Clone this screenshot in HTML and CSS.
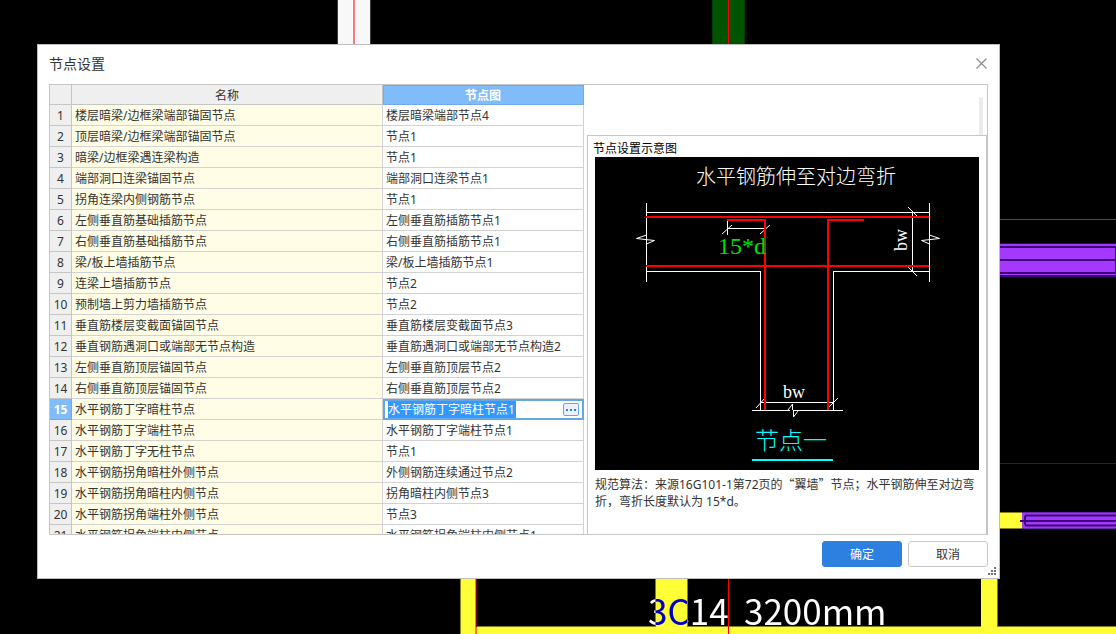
FILE: index.html
```html
<!DOCTYPE html>
<html lang="zh-CN">
<head>
<meta charset="utf-8">
<title>节点设置</title>
<link rel="stylesheet" href="styles.css">
</head>
<body>
<svg class="model" aria-hidden="true">
  <!-- columns above the dialog -->
  <rect x="337" y="0" width="34" height="60" fill="#3c3c3c"/>
  <rect x="338" y="0" width="32" height="60" fill="#f8f8f8"/>
  <rect x="353" y="0" width="2" height="60" fill="#f77c7c"/>
  <rect x="712" y="0" width="33" height="60" fill="#003c00"/>
  <rect x="713" y="0" width="31" height="60" fill="#005400"/>
  <!-- beams on the right -->
  <rect x="990" y="219" width="100%" height="1" fill="#dc1414"/>
  <rect x="990" y="243" width="100%" height="34" fill="#3d0078"/>
  <g fill="#a538ff">
    <rect x="990" y="244" width="100%" height="2"/>
    <rect x="990" y="248" width="125" height="11"/>
    <rect x="990" y="261" width="125" height="11"/>
    <rect x="990" y="274" width="100%" height="1"/>
  </g>
  <rect x="990" y="463" width="100%" height="1" fill="#780000"/>
  <rect x="990" y="512" width="32" height="17" fill="#828219"/>
  <rect x="990" y="513" width="32" height="15" fill="#ffff38"/>
  <rect x="1022" y="512" width="100%" height="17" fill="#6a20b0"/>
  <rect x="1022" y="513" width="100%" height="15" fill="#a538ff"/>
  <path d="M1300 515.5H1026L1025 517V524L1026 525.5H1300" fill="none" stroke="#3d0078" stroke-width="2"/>
  <rect x="1020" y="520" width="100%" height="2" fill="#3d0078"/>
  <!-- walls below the dialog -->
  <g fill="#828219">
    <rect x="460" y="570" width="16" height="100%"/>
    <rect x="655" y="570" width="33" height="60"/>
    <rect x="981" y="570" width="17" height="60"/>
    <rect x="476" y="626" width="100%" height="100%"/>
  </g>
  <g fill="#ffff38">
    <rect x="461" y="570" width="14" height="100%"/>
    <rect x="656" y="570" width="31" height="57"/>
    <rect x="981" y="570" width="16" height="57"/>
    <rect x="477" y="627" width="100%" height="100%"/>
  </g>
  <rect x="475" y="570" width="1" height="100%" fill="#ff7a1c"/>
  <rect x="476" y="570" width="1" height="57" fill="#780000"/>
  <rect x="476" y="627" width="1" height="100%" fill="#ff7a1c"/>
  <text class="model-label" x="648" y="625">3C14</text>
  <text class="model-label" x="744" y="625">3200mm</text>
  <rect x="728" y="0" width="1" height="100%" fill="#ff0000"/>
</svg>

<main class="desktop">
  <section class="dialog" role="dialog" aria-labelledby="dialog-title">
    <header class="titlebar">
      <h1 class="dialog-title" id="dialog-title">节点设置</h1>
      <button class="close" type="button" aria-label="关闭">
        <svg width="11" height="11" viewBox="0 0 11 11"><path d="M.5 .5L10.500 10.500M10.500 .5L.5 10.500" stroke="#8c8c8c" stroke-width="1.200" fill="none"/></svg>
      </button>
    </header>

    <div class="frame">
      <div class="grid-pane">
        <table class="grid">
          <colgroup><col class="col-no"><col class="col-name"><col class="col-node"></colgroup>
          <thead>
            <tr><th></th><th>名称</th><th class="current">节点图</th></tr>
          </thead>
          <tbody>
            <tr><th>1</th><td>楼层暗梁/边框梁端部锚固节点</td><td>楼层暗梁端部节点4</td></tr>
            <tr><th>2</th><td>顶层暗梁/边框梁端部锚固节点</td><td>节点1</td></tr>
            <tr><th>3</th><td>暗梁/边框梁遇连梁构造</td><td>节点1</td></tr>
            <tr><th>4</th><td>端部洞口连梁锚固节点</td><td>端部洞口连梁节点1</td></tr>
            <tr><th>5</th><td>拐角连梁内侧钢筋节点</td><td>节点1</td></tr>
            <tr><th>6</th><td>左侧垂直筋基础插筋节点</td><td>左侧垂直筋插筋节点1</td></tr>
            <tr><th>7</th><td>右侧垂直筋基础插筋节点</td><td>右侧垂直筋插筋节点1</td></tr>
            <tr><th>8</th><td>梁/板上墙插筋节点</td><td>梁/板上墙插筋节点1</td></tr>
            <tr><th>9</th><td>连梁上墙插筋节点</td><td>节点2</td></tr>
            <tr><th>10</th><td>预制墙上剪力墙插筋节点</td><td>节点2</td></tr>
            <tr><th>11</th><td>垂直筋楼层变截面锚固节点</td><td>垂直筋楼层变截面节点3</td></tr>
            <tr><th>12</th><td>垂直钢筋遇洞口或端部无节点构造</td><td>垂直筋遇洞口或端部无节点构造2</td></tr>
            <tr><th>13</th><td>左侧垂直筋顶层锚固节点</td><td>左侧垂直筋顶层节点2</td></tr>
            <tr><th>14</th><td>右侧垂直筋顶层锚固节点</td><td>右侧垂直筋顶层节点2</td></tr>
            <tr><th class="current">15</th><td>水平钢筋丁字暗柱节点</td><td class="editing"><div class="editor"><input class="editor-text" type="text" aria-label="节点图" value="水平钢筋丁字暗柱节点1"><button class="more" type="button" aria-label="选择节点"><svg width="10" height="2" viewBox="0 0 10 2"><path d="M0 0h2v2H0zM4 0h2v2H4zM8 0h2v2H8z" fill="#2d7fe0"/></svg></button></div></td></tr>
            <tr><th>16</th><td>水平钢筋丁字端柱节点</td><td>水平钢筋丁字端柱节点1</td></tr>
            <tr><th>17</th><td>水平钢筋丁字无柱节点</td><td>节点1</td></tr>
            <tr><th>18</th><td>水平钢筋拐角暗柱外侧节点</td><td>外侧钢筋连续通过节点2</td></tr>
            <tr><th>19</th><td>水平钢筋拐角暗柱内侧节点</td><td>拐角暗柱内侧节点3</td></tr>
            <tr><th>20</th><td>水平钢筋拐角端柱外侧节点</td><td>节点3</td></tr>
            <tr><th>21</th><td>水平钢筋拐角端柱内侧节点</td><td>水平钢筋拐角端柱内侧节点1</td></tr>
          </tbody>
        </table>
      </div>

      <div class="side">
        <div class="side-top"><div class="thumb"></div></div>
        <section class="preview">
          <h2 class="preview-title">节点设置示意图</h2>
          <svg class="drawing" viewBox="595 157 384 313" role="img" aria-label="节点设置示意图">
            <rect x="595" y="157" width="384" height="313" fill="#000"/>
            <text class="cad" x="696" y="184" font-size="20" fill="#fff">水平钢筋伸至对边弯折</text>
            <g fill="none" stroke="#fff" shape-rendering="crispEdges">
              <path d="M646.500 203V282M929.500 203V282M646 212.500H930M646 271.500H761M833 271.500H930M760.500 271V410M833.500 271V410M912.500 212V272M727.500 221V235M727 228.500H765M760 402.500H834M752 410.500H790M794 410.500H843"/>
            </g>
            <g fill="none" stroke="#fff">
              <path d="M646.500 235L636.500 238.500L654.500 240.500L646.500 244M929.500 235L939.500 238.500L921.500 240.500L929.500 244M722 234L732 225M760 234L770 225M908 207L917 216M908 267L917 276M756 408L765 398M828 408L838 398M788 410L792.500 404V410M793.500 410V417L798 411"/>
            </g>
            <g fill="none" stroke="#f00" stroke-width="2" shape-rendering="crispEdges">
              <path d="M646 217H929M646 266H929M727 220H765V410M864 220H828V410"/>
            </g>
            <text class="cad" x="718" y="254" font-size="24" fill="#00e000">15*d</text>
            <text class="cad" x="783" y="398" font-size="18" fill="#fff">bw</text>
            <text class="cad" transform="translate(907 251) rotate(-90)" font-size="18" fill="#fff">bw</text>
            <text class="cad" x="755" y="449" font-size="24" fill="#0ff">节点一</text>
            <rect x="752" y="459" width="81" height="2" fill="#0ff"/>
          </svg>
          <p class="note">规范算法：来源16G101-1第72页的<span class="wide">“</span>翼墙<span class="wide">”</span>节点；水平钢筋伸至对边弯折，弯折长度默认为 15*d。</p>
        </section>
      </div>
    </div>

    <footer class="actions">
      <button class="btn primary" type="button">确定</button>
      <button class="btn" type="button">取消</button>
    </footer>
    <svg class="grip" width="8" height="8" viewBox="0 0 8 8" aria-hidden="true"><path d="M6 0h2v2H6zM3 3h2v2H3zM6 3h2v2H6zM0 6h2v2H0zM3 6h2v2H3zM6 6h2v2H6z" fill="#6e7378"/></svg>
  </section>
</main>
</body>
</html>
```

FILE: styles.css
```css
* {
  box-sizing: border-box;
}

body {
  margin: 0;
  background: #000;
  color: #333;
  font-family: "Noto Sans", "Noto Sans CJK SC", sans-serif;
  font-size: 12px;
  overflow: hidden;
}

button,
input {
  font: inherit;
}

.model {
  position: absolute;
  inset: 0;
  width: 100%;
  height: 100%;
  isolation: isolate;
  background: #000;
}

.model-label {
  font-family: "Noto Sans CJK SC", sans-serif;
  font-size: 35px;
  fill: #fff;
  mix-blend-mode: difference;
}

.desktop {
  position: relative;
  display: flex;
  height: 100vh;
  padding: 44px 116px 55px 37px;
}

.dialog {
  position: relative;
  flex: 1;
  display: flex;
  flex-direction: column;
  min-width: 0;
  padding: 0 11px 11px;
  border: 1px solid #bebebe;
  background: #fff;
}

.titlebar {
  display: flex;
  align-items: center;
  justify-content: space-between;
  height: 39px;
  flex: none;
  padding-bottom: 3px;
}

.dialog-title {
  margin: 0;
  font-size: 14px;
  font-weight: 400;
}

.close {
  display: flex;
  padding: 1px;
  border: 0;
  background: none;
}

.frame {
  flex: 1;
  display: flex;
  min-height: 0;
  border: 1px solid #c5c5c5;
}

.grid-pane {
  flex: 534;
  min-width: 0;
  overflow: hidden;
}

.grid {
  width: 100%;
  table-layout: fixed;
  border-collapse: separate;
  border-spacing: 0;
}

.col-no {
  width: 22px;
}

.col-node {
  width: 201px;
}

.grid th,
.grid td {
  height: 21px;
  padding: 2px 3px 0;
  border: solid #d2d2d2;
  border-width: 0 1px 1px 0;
  line-height: 18px;
  white-space: nowrap;
  overflow: hidden;
}

.grid th {
  padding: 2px 0 0;
  border-color: #c5c5c5;
  background: #efefef;
  font-weight: 400;
  text-align: center;
}

.grid thead th {
  height: 20px;
  line-height: 17px;
}

.grid td {
  text-align: left;
}

.grid td:nth-child(2) {
  background: #fffde6;
}

.grid th.current {
  border-color: #6fabe8;
  background: #80bbfa;
  color: #fff;
  font-weight: 700;
}

.grid thead th.current {
  box-shadow: inset 1px 1px #6fabe8;
}

.grid td.editing {
  padding: 0;
  border: 0;
}

.editor {
  display: flex;
  align-items: center;
  justify-content: space-between;
  height: 21px;
  padding: 0 3px;
  border: 2px solid #65a6e6;
  background: #fff;
}

.editor-text {
  width: 128px;
  height: 17px;
  padding: 0;
  border: 0;
  background: #3399ff;
  color: #fff;
}

.more {
  display: flex;
  align-items: center;
  justify-content: center;
  width: 16px;
  height: 13px;
  padding: 0;
  border: 1px solid #65a6e6;
  border-radius: 2px;
  background: #eaf3fd;
}

.side {
  flex: 400;
  display: flex;
  flex-direction: column;
  min-width: 0;
  padding-left: 3px;
}

.side-top {
  display: flex;
  justify-content: flex-end;
  flex: none;
  height: 50px;
  padding: 12px 4px 0 0;
}

.thumb {
  width: 4px;
  border-radius: 2px 2px 0 0;
  background: #ebebeb;
}

.preview {
  flex: 1;
  min-height: 0;
  padding: 4px 7px 0;
  border: solid #c5c5c5;
  border-width: 1px 1px 0;
}

.preview-title {
  margin: 0 -2px;
  color: #000;
  font-size: 12px;
  font-weight: 400;
  line-height: 17px;
}

.drawing {
  display: block;
  width: 100%;
}

.cad {
  font-family: "Liberation Serif", "Noto Sans CJK SC", serif;
  font-weight: 300;
}

.note {
  margin: 5px 0 0;
  line-height: 17px;
}

.wide {
  font-family: "Noto Sans CJK SC", sans-serif;
}

.actions {
  display: flex;
  justify-content: flex-end;
  gap: 6px;
  padding-top: 6px;
}

.btn {
  width: 80px;
  height: 26px;
  padding: 0;
  border: 1px solid #c8c8c8;
  border-radius: 3px;
  background: #fff;
  color: #333;
}

.btn.primary {
  border-color: #2d7fe0;
  background: #2d7fe0;
  color: #fff;
}

.grip {
  position: absolute;
  right: 3px;
  bottom: 3px;
}
```
